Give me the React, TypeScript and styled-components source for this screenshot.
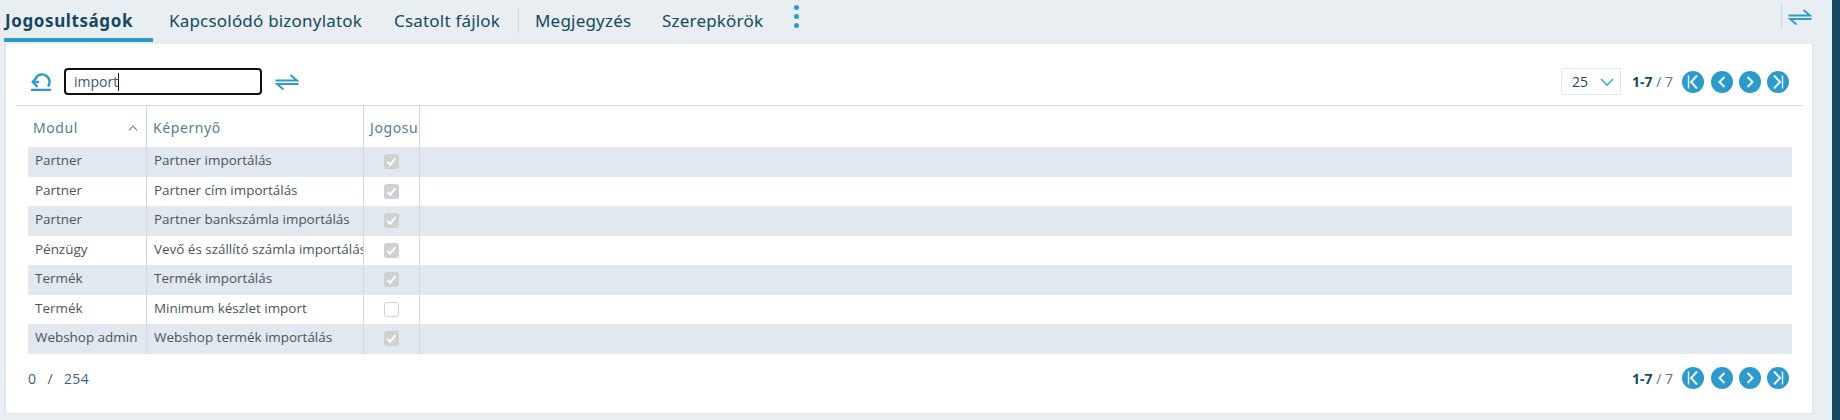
import React from "react";
import styled, { createGlobalStyle } from "styled-components";

const GlobalStyle = createGlobalStyle`
  html, body {
    margin: 0;
    width: 1840px;
    height: 420px;
    overflow: hidden;
    background: #e9eef3;
    font-family: "Open Sans", "Liberation Sans", sans-serif;
  }
  * { box-sizing: border-box; }
`;

const BLUE = "#2d9acb";
const NAVY = "#14495f";

const Page = styled.div`
  display: flex;
  width: 1840px;
  height: 420px;
`;

const Main = styled.div`
  width: 1832px;
  display: flex;
  flex-direction: column;
`;

const SideBar = styled.div`
  width: 8px;
  background: ${NAVY};
`;

const TabStrip = styled.div`
  height: 44px;
  display: flex;
  align-items: flex-start;
  padding-left: 4px;
  font-family: "Noto Sans", sans-serif;
  font-size: 17px;
  color: ${NAVY};
`;

const Tab = styled.div<{ $active?: boolean; $width: number; $gap: number }>`
  width: ${(p) => p.$width}px;
  margin-right: ${(p) => p.$gap}px;
  height: 42px;
  padding: 9px 0 0 ${(p) => (p.$active ? 1 : 0)}px;
  white-space: nowrap;
  font-weight: ${(p) => (p.$active ? 700 : 400)};
  letter-spacing: ${(p) => (p.$active ? 0.6 : 0.2)}px;
  border-bottom: ${(p) => (p.$active ? `4px solid ${BLUE}` : "none")};
`;

const TabDivider = styled.div`
  width: 1px;
  height: 25px;
  margin: 8px 16px 0 0;
  background: #cfd8e0;
`;

const MoreDots = styled.div`
  width: 6px;
  margin: 5px 0 0 -2px;
  display: flex;
  flex-direction: column;
  gap: 4px;
  & > span {
    width: 5px;
    height: 5px;
    border-radius: 50%;
    background: ${BLUE};
  }
`;

const StripEnd = styled.div`
  margin-left: auto;
  margin-right: 20px;
  margin-top: 4px;
  display: flex;
  align-items: center;
  gap: 6px;
  height: 25px;
  border-left: 1px solid #cfd8e0;
  padding-left: 6px;
`;

const Card = styled.div`
  width: 1810px;
  height: 371px;
  margin-left: 4px;
  background: #fff;
  border: 1px solid #e1e7ed;
  border-width: 0 2px 2px 2px;
  padding-left: 10px;
  padding-right: 10px;
  display: flex;
  flex-direction: column;
`;

const Toolbar = styled.div`
  height: 62px;
  width: 1787px;
  border-bottom: 1px solid #d3dbe3;
  display: flex;
  align-items: flex-start;
  padding: 24px 14px 0 15px;
`;

const IconSlot = styled.div<{ $gap: number }>`
  height: 27px;
  display: flex;
  align-items: center;
  margin-right: ${(p) => p.$gap}px;
`;

const SearchBox = styled.div`
  width: 198px;
  height: 27px;
  border: 2px solid #111;
  border-radius: 4px;
  padding-left: 8px;
  font-size: 14px;
  line-height: 24px;
  color: #44596a;
  margin-right: 13px;
`;

const TextCaret = styled.span`
  display: inline-block;
  width: 1px;
  height: 18px;
  background: #111;
  vertical-align: -4px;
`;

const Pager = styled.div`
  margin-left: auto;
  display: flex;
  align-items: center;
  height: 27px;
`;

const PageSize = styled.div`
  width: 60px;
  height: 27px;
  border: 1px solid #dfe6ec;
  border-radius: 2px;
  padding: 0 6px 0 10px;
  margin-right: 11px;
  display: flex;
  align-items: center;
  justify-content: space-between;
  font-size: 14px;
  color: ${NAVY};
`;

const PageCount = styled.div`
  width: 50px;
  font-size: 14px;
  color: #5c7484;
  white-space: nowrap;
  & > b {
    color: ${NAVY};
    font-weight: 700;
  }
`;

const PageButton = styled.div<{ $gap?: number }>`
  width: 22px;
  height: 22px;
  border-radius: 50%;
  background: ${BLUE};
  margin-right: ${(p) => p.$gap ?? 6}px;
  display: flex;
  align-items: center;
  justify-content: center;
`;

const HeaderRow = styled.div`
  width: 1787px;
  height: 41px;
  display: grid;
  grid-template-columns: 131px 217px 56px;
  font-family: "Noto Sans", sans-serif;
  font-size: 14px;
  letter-spacing: 0.6px;
  color: #5a7b8e;
`;

const HeaderCell = styled.div<{ $pad: number }>`
  display: flex;
  align-items: center;
  justify-content: space-between;
  padding: 2px 8px 0 ${(p) => p.$pad}px;
  border-right: 1px solid #cfd8e0;
  white-space: nowrap;
  overflow: hidden;
`;

const Rows = styled.div`
  width: 1764px;
  margin-left: 12px;
`;

const Row = styled.div<{ $striped: boolean }>`
  height: 29.5px;
  display: grid;
  grid-template-columns: 119px 217px 56px;
  background: ${(p) => (p.$striped ? "#e1e8ef" : "#fff")};
`;

const Cell = styled.div<{ $pad: number }>`
  padding-left: ${(p) => p.$pad}px;
  padding-bottom: 3px;
  border-right: 1px solid #cfd8e0;
  font-size: 13.45px;
  color: #4a5560;
  display: flex;
  align-items: center;
  white-space: nowrap;
  overflow: hidden;
`;

const CheckCell = styled.div`
  border-right: 1px solid #cfd8e0;
  display: flex;
  align-items: center;
  justify-content: center;
`;

const CheckBox = styled.div<{ $checked: boolean }>`
  width: 15px;
  height: 15px;
  border-radius: 3px;
  background: ${(p) => (p.$checked ? "#cfd0d2" : "#fff")};
  border: ${(p) => (p.$checked ? "none" : "1px solid #cfd0d2")};
  display: flex;
  align-items: center;
  justify-content: center;
`;

const Footer = styled.div`
  width: 1787px;
  display: flex;
  align-items: flex-start;
  justify-content: space-between;
  padding: 11px 14px 0 12px;
`;

const Counter = styled.div`
  font-size: 14px;
  line-height: 27px;
  letter-spacing: 0.4px;
  color: #3d6277;
  display: flex;
  gap: 11px;
`;

const SwapIcon = () => (
  <svg width="24" height="16" viewBox="0 0 24 16" fill="none" stroke={BLUE}>
    <path d="M0.5 6.5H22L15.5 1" strokeWidth="2" />
    <path d="M23.5 10H2L8.5 15.5" strokeWidth="2" />
  </svg>
);

const RefreshIcon = () => (
  <svg width="20" height="19" viewBox="0 0 20 19" fill="none" stroke={BLUE} strokeWidth="2.4">
    <path d="M17 14.5A7.4 7.4 0 0 0 5 5.4" />
    <path d="M6 5L1.8 10L6.5 14.8" />
    <path d="M2 10H8" />
    <path d="M0 18H20" strokeWidth="2.6" />
  </svg>
);

const Chevron = ({ d }: { d: string }) => (
  <svg width="14" height="14" viewBox="0 0 14 14" fill="none" stroke="#eaf6fb" strokeWidth="2">
    <path d={d} />
  </svg>
);

const PagerButtons = () => (
  <>
    <PageButton $gap={7}>
      <svg width="14" height="14" viewBox="0 0 14 14" fill="none" stroke="#eaf6fb">
        <path d="M2.5 0.5V13.5" strokeWidth="1.4" />
        <path d="M11 0.5L5 7L11 13.5" strokeWidth="2" />
      </svg>
    </PageButton>
    <PageButton>
      <Chevron d="M9.5 2L4.5 7L9.5 12" />
    </PageButton>
    <PageButton>
      <Chevron d="M4.5 2L9.5 7L4.5 12" />
    </PageButton>
    <PageButton $gap={0}>
      <svg width="14" height="14" viewBox="0 0 14 14" fill="none" stroke="#eaf6fb">
        <path d="M11.5 0.5V13.5" strokeWidth="1.4" />
        <path d="M3 0.5L9 7L3 13.5" strokeWidth="2" />
      </svg>
    </PageButton>
  </>
);

const rows = [
  { modul: "Partner", screen: "Partner importálás", checked: true },
  { modul: "Partner", screen: "Partner cím importálás", checked: true },
  { modul: "Partner", screen: "Partner bankszámla importálás", checked: true },
  { modul: "Pénzügy", screen: "Vevő és szállító számla importálás", checked: true },
  { modul: "Termék", screen: "Termék importálás", checked: true },
  { modul: "Termék", screen: "Minimum készlet import", checked: false },
  { modul: "Webshop admin", screen: "Webshop termék importálás", checked: true },
];

const App: React.FC = () => (
  <Page>
    <GlobalStyle />
    <Main>
      <TabStrip>
        <Tab $active $width={149} $gap={16}>Jogosultságok</Tab>
        <Tab $width={193} $gap={32}>Kapcsolódó bizonylatok</Tab>
        <Tab $width={108} $gap={16}>Csatolt fájlok</Tab>
        <TabDivider />
        <Tab $width={95} $gap={32}>Megjegyzés</Tab>
        <Tab $width={102} $gap={32}>Szerepkörök</Tab>
        <MoreDots>
          <span />
          <span />
          <span />
        </MoreDots>
        <StripEnd>
          <SwapIcon />
        </StripEnd>
      </TabStrip>
      <Card>
        <Toolbar>
          <IconSlot $gap={13}>
            <RefreshIcon />
          </IconSlot>
          <SearchBox>
            import
            <TextCaret />
          </SearchBox>
          <IconSlot $gap={0}>
            <SwapIcon />
          </IconSlot>
          <Pager>
            <PageSize>
              25
              <svg width="14" height="8" viewBox="0 0 14 8" fill="none" stroke={BLUE} strokeWidth="1.3">
                <path d="M1 1L7 7L13 1" />
              </svg>
            </PageSize>
            <PageCount>
              <b>1-7</b> / 7
            </PageCount>
            <PagerButtons />
          </Pager>
        </Toolbar>
        <HeaderRow>
          <HeaderCell $pad={17}>
            Modul
            <svg width="10" height="6" viewBox="0 0 10 6" fill="none" stroke="#5c7484" strokeWidth="1.1">
              <path d="M1 5.5L5 1L9 5.5" />
            </svg>
          </HeaderCell>
          <HeaderCell $pad={6}>Képernyő</HeaderCell>
          <HeaderCell $pad={6}>Jogosultság</HeaderCell>
        </HeaderRow>
        <Rows>
          {rows.map((row, i) => (
            <Row key={i} $striped={i % 2 === 0}>
              <Cell $pad={7}>{row.modul}</Cell>
              <Cell $pad={7}>{row.screen}</Cell>
              <CheckCell>
                <CheckBox $checked={row.checked}>
                  {row.checked && (
                    <svg width="11" height="11" viewBox="0 0 11 11" fill="none" stroke="#fff" strokeWidth="2">
                      <path d="M1.5 6L4.2 8.8L9.5 2" />
                    </svg>
                  )}
                </CheckBox>
              </CheckCell>
            </Row>
          ))}
        </Rows>
        <Footer>
          <Counter>
            <span>0</span>
            <span>/</span>
            <span>254</span>
          </Counter>
          <Pager>
            <PageCount>
              <b>1-7</b> / 7
            </PageCount>
            <PagerButtons />
          </Pager>
        </Footer>
      </Card>
    </Main>
    <SideBar />
  </Page>
);

export default App;
